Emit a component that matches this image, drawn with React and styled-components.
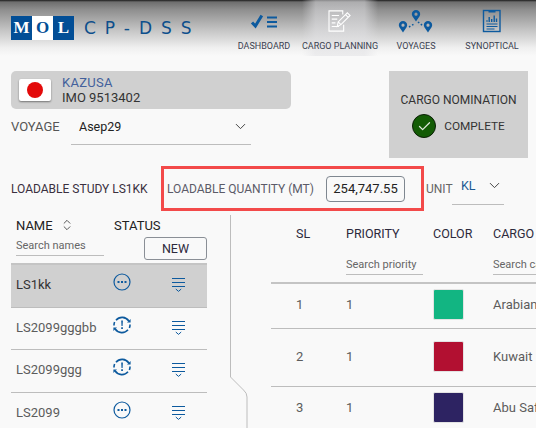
import React from "react";
import styled, { createGlobalStyle } from "styled-components";
import { ChevronDown, ChevronsUpDown, Check } from "lucide-react";

const BLUE = "#0d5a9e";

const studies = [
  { name: "LS1kk", status: "pending", active: true, height: 45 },
  { name: "LS2099gggbb", status: "refresh", height: 42 },
  { name: "LS2099ggg", status: "refresh", height: 43 },
  { name: "LS2099", status: "pending", height: 43 },
];

const cargos = [
  { sl: 1, color: "#12b582", cargo: "Arabian Light", top: 5, bottom: 8 },
  { sl: 2, color: "#b21031", cargo: "Kuwait Export", top: 12, bottom: 14 },
  { sl: 3, color: "#2d2362", cargo: "Abu Safah", top: 5, bottom: 6 },
];

function DashboardIcon() {
  return (
    <svg width="28" height="24" viewBox="0 0 28 24">
      <path d="M2 13.500l3.400 3.600L11.800 6.500" fill="none" stroke={BLUE} strokeWidth="3" />
      <path d="M17 8.500h10M17 13h10M17 17.500h10" stroke={BLUE} strokeWidth="2" />
    </svg>
  );
}

function PlanningIcon() {
  return (
    <svg width="24" height="22" viewBox="0 0 26 24">
      <path
        d="M16 5V1H1v22h16v-7M4 6h8M4 10h6M4 14h4M4 18h8"
        fill="none"
        stroke="#fff"
        strokeWidth="1.200"
      />
      <path
        d="M10 18l1-5L21 3l3 3-10 10zM11 13l3 3M19 5l3 3"
        fill="none"
        stroke="#fff"
        strokeWidth="1.200"
      />
    </svg>
  );
}

function Pin({ x, y }) {
  return (
    <path
      d={`M${x} ${y}a4.200 4.200 0 0 0-4.200 4.200c0 2.600 3 4.600 4.200 7.300 1.200-2.700 4.200-4.700 4.200-7.300A4.200 4.200 0 0 0 ${x} ${y}zm0 2.600a1.600 1.600 0 1 1 0 3.200 1.600 1.600 0 0 1 0-3.200z`}
      fill={BLUE}
      fillRule="evenodd"
    />
  );
}

function VoyagesIcon() {
  return (
    <svg width="36" height="24" viewBox="0 -1 36 24">
      <Pin x={18} y={0} />
      <Pin x={5} y={11} />
      <Pin x={30} y={11} />
      <path d="M11 17l5-3M20 12l5 4" stroke={BLUE} strokeWidth="1.600" strokeDasharray="1.600 2" fill="none" />
    </svg>
  );
}

function SynopticalIcon() {
  return (
    <svg width="20" height="24" viewBox="0 0 20 24">
      <rect x="1.500" y="1.500" width="16.500" height="21" fill="none" stroke={BLUE} strokeWidth="1.400" />
      <path d="M6.500 1h7v2.500h-7z" fill={BLUE} />
      <path d="M4.500 11h1v2h-1zM6.500 8h1.400v5H6.500zM9 10h1.400v3H9zM11.500 6.500h1.400V13h-1.400zM13.800 9.500h1.400V13h-1.400z" fill={BLUE} />
      <path d="M4.500 15h11M4.500 17.500h11M4.500 20h8" stroke={BLUE} strokeWidth="1.100" />
    </svg>
  );
}

function PendingIcon() {
  return (
    <svg width="18" height="18" viewBox="0 0 18 18">
      <circle cx="9" cy="9" r="8" fill="none" stroke={BLUE} strokeWidth="1.200" />
      <path d="M4.500 9h2M8 9h2M11.500 9h2" stroke={BLUE} strokeWidth="1.800" />
    </svg>
  );
}

function RefreshIcon() {
  return (
    <svg width="18" height="18" viewBox="0 0 18 18">
      <path d="M3 4.200A8 8 0 0 1 15.800 5M15 13.800A8 8 0 0 1 2.200 13" fill="none" stroke={BLUE} strokeWidth="1.600" />
      <path d="M1 9.500A8 8 0 0 1 1.600 6M17 8.500a8 8 0 0 1-.6 3.500" fill="none" stroke={BLUE} strokeWidth="1.600" />
      <path d="M14 6.500h3.600V3zM4 11.500H.4V15z" fill={BLUE} />
      <path d="M8.200 4.600h1.700l-.3 5.400H8.500zM8.200 11.200h1.700v1.800H8.200z" fill={BLUE} />
    </svg>
  );
}

function RowMenuIcon() {
  return (
    <svg width="14" height="16" viewBox="0 0 14 16">
      <path d="M0 1.500h13M0 5.500h13M0 9.500h13" stroke={BLUE} strokeWidth="1.100" />
      <path d="M3.800 12l2.700 2.400L9.200 12" fill="none" stroke={BLUE} strokeWidth="1" />
    </svg>
  );
}

function DividerShape() {
  return (
    <Divider width="18" height="213" viewBox="0 0 18 213">
      <path d="M0.500 0v162l13 13q3.500 3 3.500 7v31" fill="none" stroke="#bdbdbd" strokeWidth="1" />
    </Divider>
  );
}

export default function App() {
  return (
    <Page>
      <GlobalStyle />
      <Header>
        <Logo>
          <LogoBadge>
            <span>M</span>
            <LogoO>O</LogoO>
            <span>L</span>
          </LogoBadge>
          <LogoName>CP-DSS</LogoName>
        </Logo>
        <Nav>
          <NavItem>
            <NavIcon>
              <DashboardIcon />
            </NavIcon>
            <NavLabel>DASHBOARD</NavLabel>
          </NavItem>
          <NavItem $active>
            <NavIcon>
              <PlanningIcon />
            </NavIcon>
            <NavLabel>CARGO PLANNING</NavLabel>
          </NavItem>
          <NavItem>
            <NavIcon>
              <VoyagesIcon />
            </NavIcon>
            <NavLabel>VOYAGES</NavLabel>
          </NavItem>
          <NavItem>
            <NavIcon>
              <SynopticalIcon />
            </NavIcon>
            <NavLabel>SYNOPTICAL</NavLabel>
          </NavItem>
        </Nav>
      </Header>

      <Summary>
        <ShipColumn>
          <ShipCard>
            <FlagBox>
              <FlagDot />
            </FlagBox>
            <ShipText>
              <ShipName>KAZUSA</ShipName>
              <ShipImo>IMO 9513402</ShipImo>
            </ShipText>
          </ShipCard>
          <VoyageRow>
            <VoyageLabel>VOYAGE</VoyageLabel>
            <VoyageSelect>
              <span>Asep29</span>
              <ChevronDown size={17} strokeWidth={1.4} color="#444" />
            </VoyageSelect>
          </VoyageRow>
        </ShipColumn>
        <NominationCard>
          <NominationTitle>CARGO NOMINATION</NominationTitle>
          <NominationState>
            <CheckBadge>
              <Check size={15} strokeWidth={2} color="#dfe8dc" />
            </CheckBadge>
            <span>COMPLETE</span>
          </NominationState>
        </NominationCard>
      </Summary>

      <StudyBar>
        <StudyTitle>LOADABLE STUDY LS1KK</StudyTitle>
        <QuantityBox>
          <QuantityLabel>LOADABLE QUANTITY (MT)</QuantityLabel>
          <QuantityValue>254,747.55</QuantityValue>
        </QuantityBox>
        <UnitLabel>UNIT</UnitLabel>
        <UnitSelect>
          <span>KL</span>
          <ChevronDown size={17} strokeWidth={1.4} color="#444" />
        </UnitSelect>
      </StudyBar>

      <Body>
        <ListPane>
          <ListHead>
            <NameHead>
              NAME
              <ChevronsUpDown size={14} strokeWidth={1.4} color="#333" />
            </NameHead>
            <span>STATUS</span>
          </ListHead>
          <ListTools>
            <SearchField $width={88}>Search names</SearchField>
            <NewButton>NEW</NewButton>
          </ListTools>
          {studies.map((study) => (
            <StudyRow key={study.name} $active={study.active} $height={study.height}>
              <StudyName $active={study.active}>{study.name}</StudyName>
              <StatusCell>
                {study.status === "pending" ? <PendingIcon /> : <RefreshIcon />}
              </StatusCell>
              <MenuCell>
                <RowMenuIcon />
              </MenuCell>
            </StudyRow>
          ))}
        </ListPane>

        <DividerShape />

        <TablePane>
          <TableHead>
            <HeadCell>SL</HeadCell>
            <HeadCell>PRIORITY</HeadCell>
            <HeadCell>COLOR</HeadCell>
            <HeadCell>CARGO</HeadCell>
            <span />
            <SearchField $width={77}>Search priority</SearchField>
            <span />
            <SearchField $width={60}>Search cargo</SearchField>
          </TableHead>
          {cargos.map((row) => (
            <CargoRow key={row.sl} $top={row.top} $bottom={row.bottom}>
              <span>{row.sl}</span>
              <span>1</span>
              <Swatch $color={row.color} />
              <CargoName>{row.cargo}</CargoName>
            </CargoRow>
          ))}
        </TablePane>
      </Body>
    </Page>
  );
}

const GlobalStyle = createGlobalStyle`
  html, body {
    margin: 0;
    padding: 0;
    background: #f9f9f9;
  }
`;

const Page = styled.div`
  width: 536px;
  height: 428px;
  overflow: hidden;
  background: #f9f9f9;
  color: #333;
  font-family: Roboto, "Liberation Sans", sans-serif;
  font-size: 12px;
`;

const Header = styled.header`
  height: 56px;
  display: flex;
  align-items: stretch;
  background: linear-gradient(#1c1c1c 0, #6e6e6e 2px, #8f8f8f 10px, #c4c4c4 30px, #f0f0f0 48px, #f9f9f9 56px);
`;

const Logo = styled.div`
  display: flex;
  align-items: center;
  margin: 0 0 0 11px;
  width: 215px;
`;

const LogoBadge = styled.div`
  width: 63px;
  height: 24px;
  display: grid;
  grid-template-columns: 21px 21px 21px;
  align-items: center;
  justify-items: center;
  background: #024e96;
  color: #fff;
  font-family: "Liberation Serif", serif;
  font-size: 17px;
  font-weight: 700;
  line-height: 24px;
`;

const LogoO = styled.span`
  width: 21px;
  height: 24px;
  text-align: center;
  background: #fff;
  color: #024e96;
`;

const LogoName = styled.div`
  margin-left: 10px;
  color: #0d4f8c;
  font-family: "DejaVu Sans", sans-serif;
  font-size: 17px;
  letter-spacing: 9px;
  white-space: nowrap;
`;

const Nav = styled.nav`
  display: flex;
`;

const NavItem = styled.div`
  width: 76px;
  display: flex;
  flex-direction: column;
  align-items: center;
  padding-top: 9px;
  background: ${(p) =>
    p.$active
      ? "linear-gradient(to right, rgba(225,225,228,0), rgba(225,225,228,.55) 18%, rgba(225,225,228,.55) 82%, rgba(225,225,228,0))"
      : "none"};
`;

const NavIcon = styled.div`
  height: 24px;
  display: flex;
  align-items: center;
  justify-content: center;
`;

const NavLabel = styled.div`
  margin-top: 7px;
  font-size: 9px;
  line-height: 12px;
  white-space: nowrap;
  color: #3a3f50;
`;

const Summary = styled.section`
  display: flex;
  padding: 15px 0 0 11px;
`;

const ShipColumn = styled.div`
  width: 280px;
`;

const ShipCard = styled.div`
  height: 38px;
  display: flex;
  align-items: center;
  background: #d0d0d0;
  border-radius: 5px;
`;

const FlagBox = styled.div`
  width: 32px;
  height: 22px;
  margin-left: 8px;
  display: flex;
  align-items: center;
  justify-content: center;
  background: #fff;
  border-radius: 2px;
  box-shadow: 0 1px 2px rgba(0, 0, 0, 0.45);
`;

const FlagDot = styled.div`
  width: 16px;
  height: 16px;
  border-radius: 50%;
  background: #e30a0a;
`;

const ShipText = styled.div`
  margin-left: 11px;
  line-height: 15px;
  font-size: 13px;
`;

const ShipName = styled.div`
  color: #43609c;
  letter-spacing: 0.3px;
`;

const ShipImo = styled.div`
  color: #333;
`;

const VoyageRow = styled.div`
  display: flex;
  align-items: flex-start;
  margin-top: 9px;
`;

const VoyageLabel = styled.div`
  width: 60px;
  line-height: 18px;
  color: #555;
  font-size: 13px;
`;

const VoyageSelect = styled.div`
  box-sizing: border-box;
  width: 180px;
  height: 27px;
  padding: 0 2px 0 8px;
  display: flex;
  align-items: flex-start;
  justify-content: space-between;
  line-height: 18px;
  border-bottom: 1px solid #bdbdbd;
  color: #222;
  font-size: 12.5px;
`;

const NominationCard = styled.aside`
  width: 139px;
  height: 87px;
  margin-left: 98px;
  display: flex;
  flex-direction: column;
  align-items: center;
  background: #d0d0d0;
`;

const NominationTitle = styled.div`
  margin-top: 22px;
  line-height: 14px;
  white-space: nowrap;
  font-size: 12px;
  color: #333;
`;

const NominationState = styled.div`
  margin-top: 7px;
  display: flex;
  align-items: center;
  gap: 8px;
  font-size: 11.8px;
  color: #333;
`;

const CheckBadge = styled.div`
  box-sizing: border-box;
  width: 24px;
  height: 24px;
  display: flex;
  align-items: center;
  justify-content: center;
  border-radius: 50%;
  border: 1px solid #0b1f06;
  background: #135c05;
`;

const StudyBar = styled.section`
  height: 45px;
  margin-top: 8px;
  padding-left: 11px;
  display: flex;
  align-items: center;
  font-size: 12px;
`;

const StudyTitle = styled.div`
  width: 150px;
  white-space: nowrap;
  color: #3a3040;
`;

const QuantityBox = styled.div`
  box-sizing: border-box;
  width: 263px;
  height: 45px;
  padding: 0 16px 0 3px;
  display: flex;
  align-items: center;
  justify-content: space-between;
  border: 3px solid #f34a4a;
`;

const QuantityLabel = styled.div`
  color: #5b5b68;
  white-space: nowrap;
`;

const QuantityValue = styled.div`
  box-sizing: border-box;
  width: 79px;
  height: 26px;
  display: flex;
  align-items: center;
  justify-content: center;
  border: 1px solid #7f8790;
  border-radius: 4px;
  color: #222;
  font-size: 13px;
`;

const UnitLabel = styled.div`
  width: 26px;
  margin-left: 2px;
  color: #666;
`;

const UnitSelect = styled.div`
  box-sizing: border-box;
  width: 52px;
  height: 39px;
  padding: 11px 1px 0 9px;
  display: flex;
  align-items: flex-start;
  justify-content: space-between;
  align-self: flex-start;
  border-bottom: 1px solid #bdbdbd;
  color: #1d5a92;
  font-size: 12.5px;
  line-height: 18px;
`;

const Body = styled.section`
  display: flex;
  margin-top: 4px;
`;

const ListPane = styled.div`
  width: 196px;
  margin-left: 11px;
`;

const ListHead = styled.div`
  height: 20px;
  padding-left: 5px;
  display: grid;
  grid-template-columns: 98px 1fr;
  align-items: center;
  font-size: 13px;
  color: #222;
`;

const NameHead = styled.span`
  display: flex;
  align-items: center;
  gap: 7px;
`;

const ListTools = styled.div`
  height: 26px;
  margin-top: 2px;
  padding-left: 5px;
  display: flex;
  justify-content: space-between;
  align-items: flex-start;
`;

const SearchField = styled.div`
  box-sizing: border-box;
  width: ${(p) => p.$width}px;
  height: 19px;
  overflow: hidden;
  white-space: nowrap;
  line-height: 17px;
  font-size: 11px;
  color: #666;
  border-bottom: 1px solid #bdbdbd;
`;

const NewButton = styled.button`
  width: 63px;
  height: 23px;
  padding: 0;
  background: #f9f9f9;
  border: 1px solid #8a8f96;
  border-radius: 3px;
  font-family: inherit;
  font-size: 12.5px;
  color: #2d2a3c;
`;

const StudyRow = styled.div`
  box-sizing: border-box;
  height: ${(p) => p.$height}px;
  display: grid;
  grid-template-columns: 91px 40px 1fr;
  align-items: start;
  background: ${(p) => (p.$active ? "#d0d0d0" : "transparent")};
  border-top: ${(p) => (p.$active ? "2px solid #c4c4c4" : "0")};
  border-bottom: 1px solid #bdbdbd;
`;

const StudyName = styled.div`
  padding: 12px 0 0 5px;
  line-height: 16px;
  font-size: 13px;
  color: ${(p) => (p.$active ? "#333" : "#5c5c5c")};
`;

const StatusCell = styled.div`
  display: flex;
  justify-content: center;
  padding-top: 8px;
`;

const MenuCell = styled.div`
  display: flex;
  padding: 12px 0 0 30px;
`;

const Divider = styled.svg`
  flex: none;
  margin-left: 23px;
`;

const TablePane = styled.div`
  flex: 1;
  margin-left: 23px;
  min-width: 0;
  overflow: hidden;
`;

const TableHead = styled.div`
  box-sizing: border-box;
  height: 69px;
  padding: 9px 0 0 25px;
  display: grid;
  grid-template-columns: 50px 87px 60px 1fr;
  grid-template-rows: 20px 22px;
  row-gap: 12px;
  border-bottom: 2px solid #c4c4c4;
`;

const HeadCell = styled.div`
  line-height: 20px;
  color: #2d2a3c;
  font-size: 12.5px;
`;

const CargoRow = styled.div`
  padding: ${(p) => p.$top}px 0 ${(p) => p.$bottom}px 25px;
  display: grid;
  grid-template-columns: 50px 87px 60px 1fr;
  align-items: center;
  border-bottom: 1px solid #bdbdbd;
  color: #5c5c5c;
  font-size: 13px;
`;

const Swatch = styled.div`
  box-sizing: border-box;
  width: 31px;
  height: 31px;
  border-radius: 2px;
  border: 1px solid #e3e3e3;
  background: ${(p) => p.$color};
`;

const CargoName = styled.div`
  white-space: nowrap;
`;
